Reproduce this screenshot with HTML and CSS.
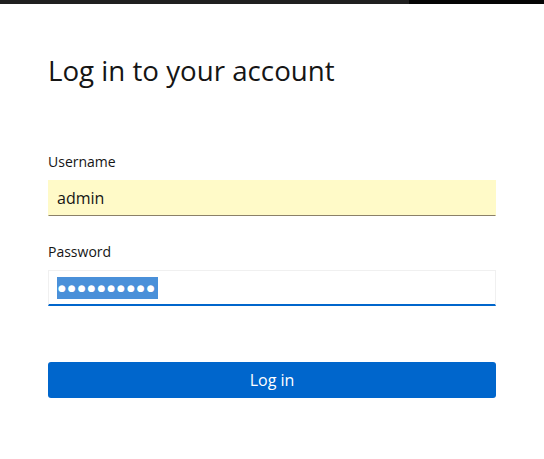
FILE: index.html
```html
<!DOCTYPE html>
<html lang="en">
<head>
    <meta charset="UTF-8">
    <title>Log in</title>
    <link rel="stylesheet" href="styles.css">
</head>
<body>
    <div class="topbar">
        <div class="topbar-left"></div>
        <div class="topbar-right"></div>
    </div>
    <div class="container">
        <h1>Log in to your account</h1>

        <form class="login-form">
            <div class="input-group">
                <label for="username">Username</label>
                <input type="text" id="username" class="autofill" value="admin">
            </div>
            <div class="input-group">
                <label for="password">Password</label>
                <!-- password field, shown with its text selected -->
                <div class="field field-focus" id="password"><span class="selected">&#9679;&#9679;&#9679;&#9679;&#9679;&#9679;&#9679;&#9679;&#9679;&#9679;</span></div>
            </div>
            <div class="actions">
                <button type="button">Log in</button>
            </div>
        </form>
    </div>
</body>
</html>
```

FILE: styles.css
```css
body {
    font-family: "Open Sans", "Liberation Sans", sans-serif;
    margin: 0;
    background-color: #ffffff;
    color: #151515;
}
.topbar {
    display: flex;
    height: 4px;
}
.topbar-left {
    flex: 0 0 409px;
    background-color: #1f1f1f;
}
.topbar-right {
    flex: 1;
    background-color: #050505;
}
.container {
    padding: 0 48px;
}
h1 {
    font-size: 27.7px;
    font-weight: 400;
    line-height: 36px;
    margin: 48px 0 0;
}
.login-form {
    margin-top: 64px;
}
.input-group {
    margin-bottom: 26px;
}
.input-group label {
    display: block;
    font-size: 14px;
    line-height: 20px;
    margin-bottom: 8px;
}
.input-group input,
.field {
    display: block;
    box-sizing: border-box;
    width: 100%;
    height: 36px;
    padding: 0 8px;
    font-family: inherit;
    font-size: 16px;
    color: #151515;
    border: 1px solid #f0f0f0;
    border-bottom-color: #8a8d90;
    border-radius: 0;
    background: #fff;
    outline: none;
}
.input-group input.autofill {
    background-color: #fffac8;
    border-color: #fffac8;
    border-bottom-color: #8b8068;
}
.field {
    display: flex;
    align-items: center;
}
.field-focus {
    border-bottom: 2px solid #0066cc;
}
.selected {
    background-color: #4a90d9;
    color: #fff;
    font-family: "DejaVu Sans", sans-serif;
    font-size: 9px;
    letter-spacing: 2px;
    line-height: 22px;
    padding: 0 1px;
}
.actions {
    margin-top: 56px;
}
.actions button {
    display: block;
    width: 100%;
    height: 36px;
    font-family: inherit;
    font-size: 16px;
    color: #fff;
    background-color: #0066cc;
    border: none;
    border-radius: 3px;
    cursor: pointer;
}
```
